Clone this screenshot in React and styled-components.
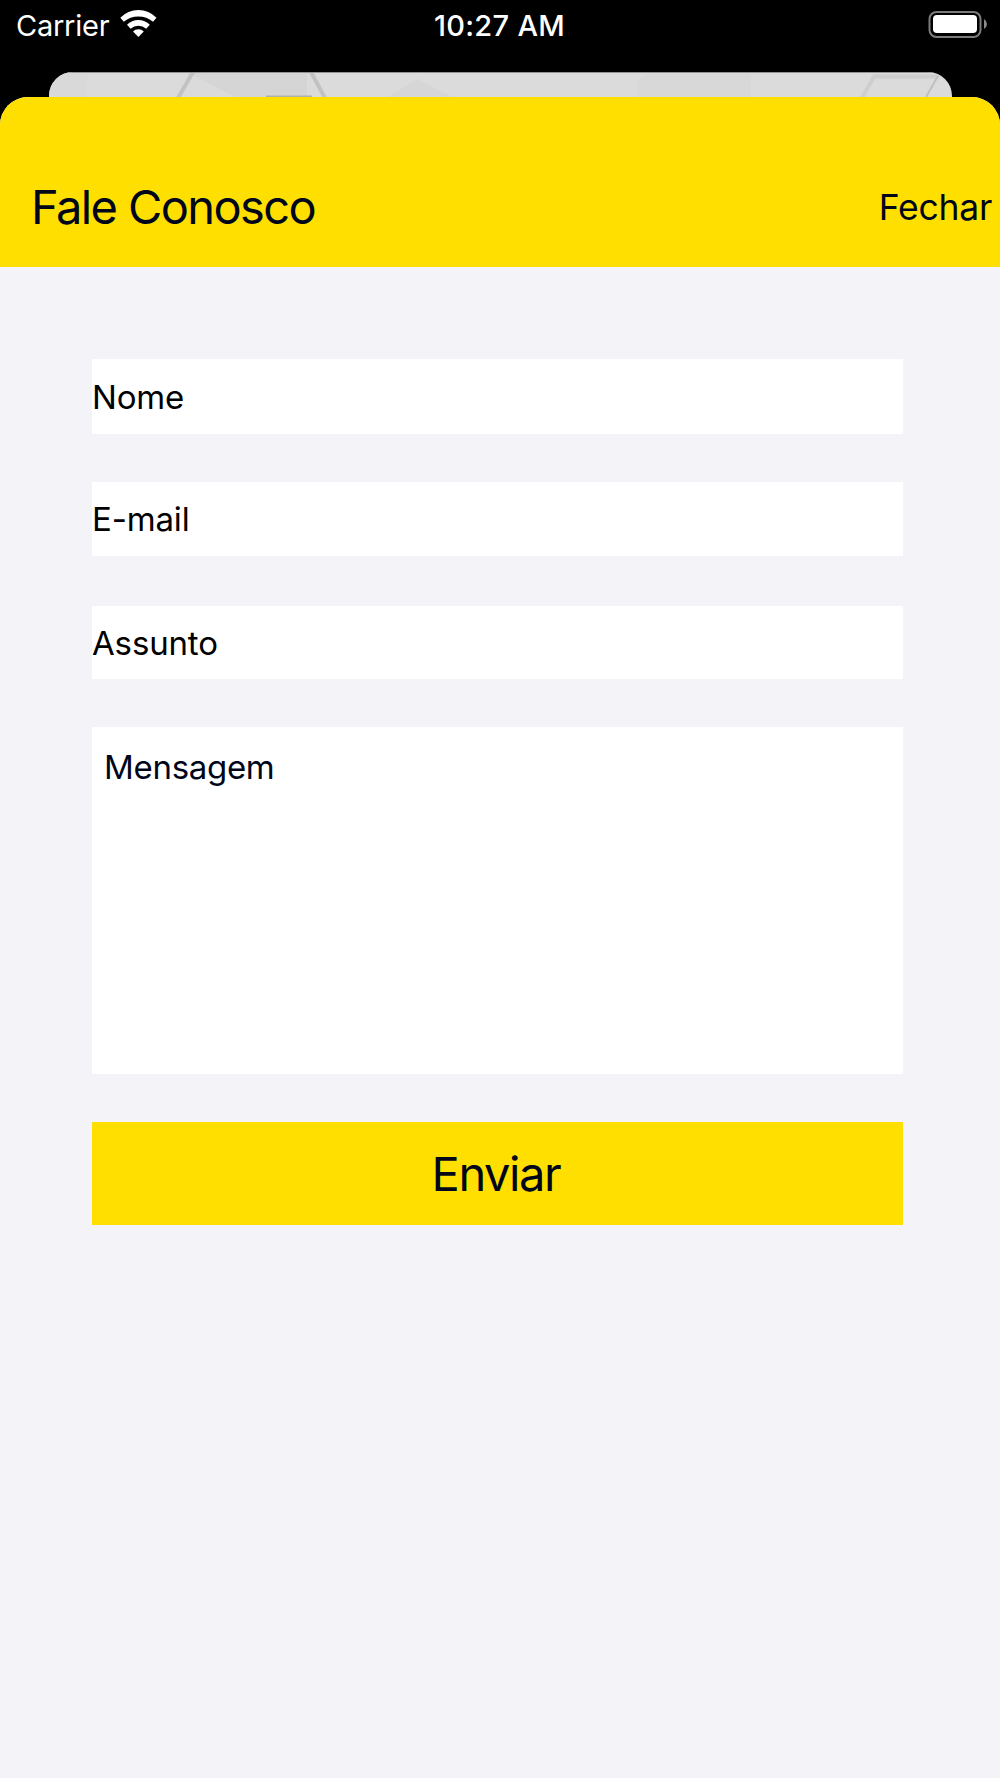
import React from "react";
import styled, { createGlobalStyle } from "styled-components";

const GlobalStyle = createGlobalStyle`
  body {
    margin: 0;
    background: #000;
    font-family: Inter, "Liberation Sans", sans-serif;
  }

  * {
    box-sizing: border-box;
  }
`;

const Screen = styled.div`
  display: flex;
  flex-direction: column;
  width: 1000px;
  height: 1778px;
  overflow: hidden;
  background: #000;
`;

const StatusBar = styled.header`
  display: grid;
  grid-template-columns: 1fr auto 1fr;
  align-items: start;
  height: 72px;
  padding: 0 12px 0 16px;
  color: #fff;
`;

const Carrier = styled.div`
  display: flex;
  gap: 11px;
  font-size: 29px;
  line-height: 52px;
  letter-spacing: -0.25px;
`;

const Clock = styled.div`
  margin-right: 5px;
  font-size: 29px;
  font-weight: 550;
  line-height: 52px;
  letter-spacing: 0.3px;
`;

const StatusIcon = styled.svg`
  display: block;
  margin-top: 9px;
  justify-self: end;
`;

const BackCard = styled.div`
  height: 25px;
  margin: 0 48px 0 49px;
  border-radius: 24px 24px 0 0;
  overflow: hidden;
  background: #dbdbdb;

  svg {
    display: block;
  }
`;

const Sheet = styled.main`
  flex: 1;
  border-radius: 28px 28px 0 0;
  overflow: hidden;
  background: #f3f3f8;
`;

const SheetHeader = styled.div`
  display: flex;
  justify-content: space-between;
  align-items: baseline;
  height: 170px;
  padding: 80px 8px 0 31px;
  background: #ffdf00;
  color: #00061a;
`;

const Title = styled.h1`
  margin: 0;
  font-size: 47px;
  font-weight: 400;
  line-height: 60px;
  letter-spacing: -1.6px;
`;

const CloseButton = styled.button`
  padding: 0;
  border: 0;
  background: none;
  color: inherit;
  font: 400 35.5px/60px Inter, sans-serif;
  letter-spacing: -0.25px;
  position: relative;
  top: -4px;
`;

const Form = styled.form`
  display: flex;
  flex-direction: column;
  width: 811px;
  margin: 92px 0 0 92px;
`;

const Field = styled.label`
  height: ${(props) => props.$height || 74}px;
  margin-bottom: ${(props) => props.$gap || 50}px;
  background: #fff;
  color: #000;
  font-size: 33px;
  line-height: ${(props) => props.$line || 75}px;
  letter-spacing: -0.15px;
`;

const MessageField = styled(Field)`
  padding: 2px 0 0 12px;
  color: #00061a;
  letter-spacing: -0.3px;
`;

const SubmitButton = styled.button`
  height: 103px;
  padding: 0 3px 1px 0;
  border: 0;
  background: #ffdf00;
  color: #00061a;
  font: 400 47px/101px Inter, sans-serif;
  letter-spacing: -1.4px;
`;

const WifiIcon = () => (
  <StatusIcon width="38" height="29" viewBox="120 9 38 29" fill="#fff">
    <path d="M120.3 17.7A25 25 0 0 1 156.5 17.7L153 21.8A22.6 22.6 0 0 0 123.8 21.8Z" />
    <path d="M127 24.8A16 16 0 0 1 149.8 24.8L146.2 28.8A11.4 11.4 0 0 0 130.6 28.8Z" />
    <path d="M133 31.4A7.6 7.6 0 0 1 143.8 31.4L138.4 37Z" />
  </StatusIcon>
);

const BatteryIcon = () => (
  <StatusIcon width="61" height="30" viewBox="927 9 61 30">
    <rect x="929.5" y="12" width="51" height="25" rx="7" fill="none" stroke="#7b7b7b" strokeWidth="2" />
    <rect x="933" y="15" width="44" height="18" rx="4" fill="#fff" />
    <path d="M984 19Q987 21 987 24T984 29Z" fill="#8c8c8c" />
  </StatusIcon>
);

// strip of the previous screen's wallpaper that stays visible above the sheet
const Wallpaper = () => (
  <svg width="903" height="25" viewBox="49 72 903 25">
    <path d="M49 72H87V97H49Z" fill="#d9d9d9" />
    <path d="M195 76L193 72H307V97H235Z" fill="#d5d5d5" />
    <path d="M417 79L452 97H388Z" fill="#d6d6d6" />
    <path d="M638 80L652 72H751V97H638Z" fill="#d8d8d8" />
    <path d="M193 72L178 98M311 72L325 98" stroke="#c2c2c2" strokeWidth="4" />
    <path d="M266 97V95.5H312V97Z" fill="#b0b0a8" />
    <path d="M939 76.5H874L862 98" fill="none" stroke="#cecece" strokeWidth="4" />
    <path d="M938 76L926 97" stroke="#c0c0c0" strokeWidth="2" />
    <path d="M49 72.5H952" stroke="#939393" />
  </svg>
);

const App = () => (
  <Screen>
    <GlobalStyle />
    <StatusBar>
      <Carrier>
        Carrier
        <WifiIcon />
      </Carrier>
      <Clock>10:27 AM</Clock>
      <BatteryIcon />
    </StatusBar>
    <BackCard>
      <Wallpaper />
    </BackCard>
    <Sheet>
      <SheetHeader>
        <Title>Fale Conosco</Title>
        <CloseButton type="button">Fechar</CloseButton>
      </SheetHeader>
      <Form onSubmit={(e) => e.preventDefault()}>
        <Field $height={75} $gap={48} $line={76}>Nome</Field>
        <Field>E-mail</Field>
        <Field $height={73} $gap={48}>Assunto</Field>
        <MessageField $height={347} $gap={48} $line={76}>Mensagem</MessageField>
        <SubmitButton type="submit">Enviar</SubmitButton>
      </Form>
    </Sheet>
  </Screen>
);

export default App;
